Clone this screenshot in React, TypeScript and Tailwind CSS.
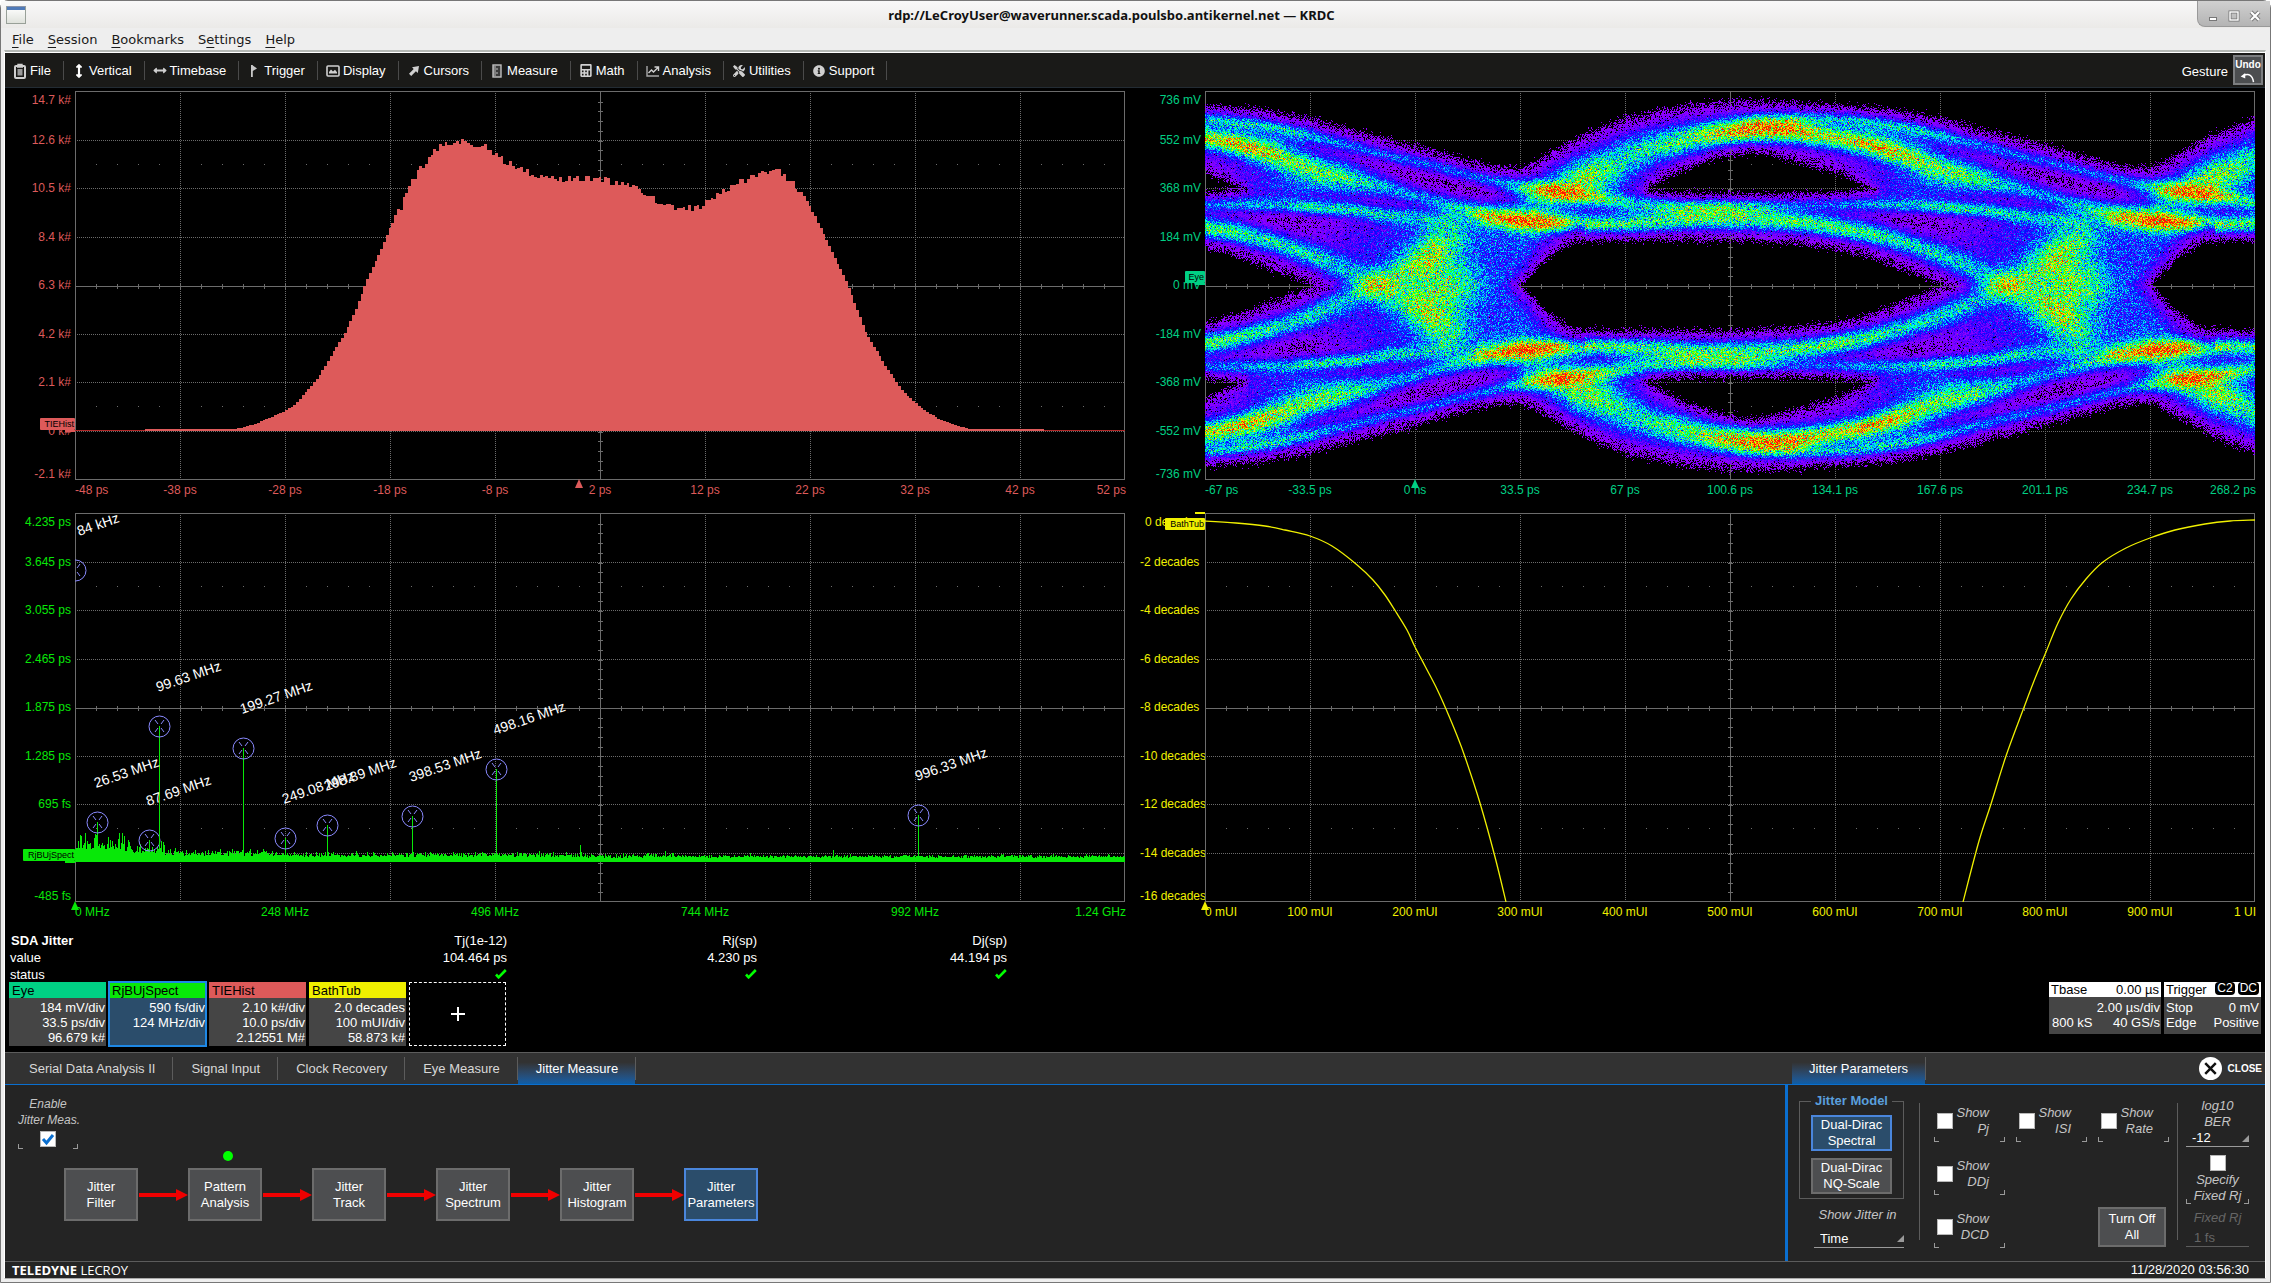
import React from "react";
import {
  FaArrowsAltH,
  FaArrowsAltV,
  FaCalculator,
  FaInfoCircle,
  FaTools,
} from "react-icons/fa";

const W = 1050;
const H = 389;
const DIV_X = 105;
const DIV_Y = 48.5;

type Pt = [number, number];
type Ridge = [number, number, number, number][];

function makeRandom(seed: number) {
  let s = seed >>> 0;
  return () => {
    s = (Math.imul(s, 1664525) + 1013904223) >>> 0;
    return s / 4294967296;
  };
}

function interp(points: Pt[], x: number) {
  if (x <= points[0][0]) return points[0][1];
  for (let i = 1; i < points.length; i++) {
    if (x <= points[i][0]) {
      const [x0, y0] = points[i - 1];
      const [x1, y1] = points[i];
      return y0 + ((y1 - y0) * (x - x0)) / (x1 - x0);
    }
  }
  return points[points.length - 1][1];
}

function smoothPath(p: Pt[]) {
  let d = `M${p[0][0]} ${p[0][1]}`;
  for (let i = 0; i < p.length - 1; i++) {
    const a = p[Math.max(i - 1, 0)];
    const b = p[i];
    const c = p[i + 1];
    const e = p[Math.min(i + 2, p.length - 1)];
    const n = [b[0] + (c[0] - a[0]) / 6, b[1] + (c[1] - a[1]) / 6, c[0] - (e[0] - b[0]) / 6, c[1] - (e[1] - b[1]) / 6];
    d += `C${n.map((v) => v.toFixed(1)).join(" ")} ${c[0]} ${c[1]}`;
  }
  return d;
}

/* ---------- Eye diagram: persistence density of the traces ---------- */

const PERIOD = 630;

/* Each ridge is unrolled in time: x, y, density, spread. */
const RIDGES: Ridge[] = [
  [
    [520, 30, 0, 7], [560, 27, 0.2, 6], [600, 25, 0.3, 6], [640, 27, 0.42, 6], [697, 35, 0.32, 5],
    [736, 44, 0.31, 5], [774, 54, 0.31, 5], [813, 64, 0.31, 5], [851, 72, 0.31, 5], [889, 82, 0.32, 5],
    [927, 91, 0.36, 6], [950, 96, 0.46, 7], [981, 101, 0.5, 7], [1019, 106, 0.46, 6], [1061, 112, 0.34, 6],
    [1110, 114, 0.3, 6], [1200, 112, 0.24, 5], [1293, 113, 0.3, 5], [1340, 114, 0.34, 5],
    [1366, 116, 0.46, 5], [1412, 119, 0.46, 5], [1443, 124, 0.38, 6], [1500, 128, 0.25, 7], [1530, 130, 0, 7],
  ],
  [
    [310, 112, 0, 10], [340, 100, 0.2, 13], [374, 84, 0.38, 17], [412, 67, 0.46, 15], [450, 55, 0.54, 13],
    [489, 46, 0.62, 11], [515, 41, 0.74, 10], [550, 38, 0.84, 9], [588, 39, 0.8, 9], [626, 46, 0.66, 8],
    [660, 52, 0.62, 8], [698, 64, 0.54, 9], [736, 76, 0.44, 10], [774, 86, 0.38, 10], [813, 97, 0.36, 7],
    [851, 107, 0.36, 6], [889, 117, 0.4, 7], [908, 124, 0.64, 8], [945, 129, 0.78, 8], [985, 132, 0.74, 7],
    [1023, 134, 0.6, 7], [1061, 133, 0.54, 8], [1120, 127, 0.55, 9], [1162, 126, 0.58, 10], [1199, 128, 0.58, 9],
    [1237, 132, 0.58, 8], [1260, 136, 0.6, 8], [1290, 141, 0.56, 8], [1328, 151, 0.49, 8],
    [1366, 164, 0.45, 9], [1393, 176, 0.38, 10], [1430, 193, 0.32, 12], [1455, 208, 0.24, 14],
    [1485, 228, 0.28, 14], [1510, 242, 0.18, 14], [1545, 256, 0, 10],
  ],
];

/* Diffuse areas: x, y, density, spread x, spread y. */
const CLOUDS: [number, number, number, number, number][] = [
  [216, 186, 0.2, 30, 20], [226, 166, 0.14, 18, 20], [255, 185, 0.18, 24, 24], [290, 160, 0.18, 36, 26],
  [330, 148, 0.14, 30, 14], [112, 92, 0.26, 40, 13], [60, 70, 0.14, 40, 18], [180, 152, 0.2, 46, 22],
  [245, 140, 0.14, 36, 14], [330, 112, 0.2, 24, 12], [385, 90, 0.3, 34, 15], [50, 105, 0.1, 40, 12],
  [60, 46, 0.14, 30, 12], [440, 118, 0.12, 60, 8], [320, 185, 0.1, 22, 24], [60, 40, 0.06, 90, 20],
];

/* Silhouette of the pattern: upper limit, lens-shaped gap and half height of the main opening. */
const OUTER: Pt[] = [
  [0, 14], [53, 17], [106, 27], [160, 41], [210, 54], [260, 68], [290, 75], [315, 77], [340, 64], [380, 42],
  [420, 26], [470, 15], [515, 10], [545, 9], [580, 10], [630, 14],
];
const LENS_TOP: Pt[] = [[0, 81], [41, 99], [80, 190], [390, 190], [443, 96], [475, 80], [513, 66], [545, 61], [565, 63], [588, 70], [630, 81]];
const LENS_BOTTOM: Pt[] = [[0, 101], [41, 97], [80, 40], [390, 40], [443, 98], [475, 102], [588, 102], [630, 101]];
const EYE_HALF: Pt[] = [
  [0, 37], [33, 29], [71, 14], [109, 0], [150, -24], [210, -70], [260, -60], [315, 0], [336, 22], [355, 36],
  [370, 44], [400, 45], [540, 45], [588, 42], [630, 37],
];

const EYE_COLORS = [
  "#9000ff", "#7a00ff", "#5a00ff", "#3800ff", "#1400ff", "#0020ff", "#0058ff", "#0098ff",
  "#00d8ff", "#00ffe0", "#00ffa0", "#00ff50", "#30ff00", "#80ff00", "#d8ff00", "#ffe000",
  "#ffa800", "#ff6000", "#ff1800",
];

function ramp(v: number) {
  const t = Math.max(0, Math.min(1, v));
  return t * t * (3 - 2 * t);
}

function buildEye(): string[] {
  const random = makeRandom(77);
  const density = new Float32Array(W * H);
  for (let x = 0; x < W; x++) {
    const local: number[][] = [];
    for (const ridge of RIDGES) {
      for (let k = -1; k < 4; k++) {
        const u = x + k * PERIOD;
        if (u < ridge[0][0] || u >= ridge[ridge.length - 1][0]) continue;
        let i = 1;
        while (ridge[i][0] <= u) i++;
        const a = ridge[i - 1];
        const b = ridge[i];
        const t = (u - a[0]) / (b[0] - a[0]);
        local.push([a[1] + (b[1] - a[1]) * t, a[2] + (b[2] - a[2]) * t, a[3] + (b[3] - a[3]) * t]);
      }
    }
    const clouds: number[][] = [];
    for (const c of CLOUDS) {
      for (let k = -1; k < 2; k++) {
        const dx = (x - c[0] - k * PERIOD) / c[3];
        if (dx * dx < 6) clouds.push([c[1], c[2], c[4], dx * dx]);
      }
    }
    const u = x % PERIOD;
    const outer = interp(OUTER, u);
    const top = interp(LENS_TOP, u);
    const bottom = interp(LENS_BOTTOM, u);
    const half = interp(EYE_HALF, u);
    for (let y = 0; y < H; y++) {
      let v = 0;
      const mirrored = H - 1 - y;
      for (const [cy, amp, s] of local) {
        const d1 = (y - cy) / s;
        const d2 = (mirrored - cy) / s;
        if (d1 * d1 < 16) v += amp * Math.exp((-d1 * d1) / 2);
        if (d2 * d2 < 16) v += amp * Math.exp((-d2 * d2) / 2);
      }
      for (const [cy, amp, s, dx2] of clouds) {
        const d1 = (y - cy) / s;
        const d2 = (mirrored - cy) / s;
        v += amp * Math.max(0, Math.exp(-(d1 * d1 + dx2) / 2) - 0.05);
        v += amp * Math.max(0, Math.exp(-(d2 * d2 + dx2) / 2) - 0.05);
      }
      const edge = Math.min(y, mirrored);
      const wobble = (random() + random() + random() - 1.5) * 5;
      const gapOuter = edge - outer + wobble;
      const gapLens = Math.max(top - edge, edge - bottom) + wobble;
      const gapEye = Math.abs(y - 194) - half + wobble;
      if (gapOuter < 0 || gapLens < 0 || gapEye < 0) v = 0;
      else {
        v = Math.max(v, 0.03 * ramp((12 - Math.min(gapOuter, gapLens, gapEye)) / 6));
        const eyeFade = u > 290 && u < 380 ? 28 : 15;
        v *= 0.12 + 0.88 * ramp(gapOuter / 16) * ramp(gapLens / 12) * ramp(gapEye / eyeFade);
        v += 0.012;
      }
      density[y * W + x] = v;
    }
  }
  const paths = EYE_COLORS.map(() => [] as string[]);
  const N = 70;
  for (let y = 0; y < H; y++) {
    let run = 0;
    let last = -1;
    for (let x = 0; x <= W; x++) {
      let level = -1;
      if (x < W) {
        const m = density[y * W + x] * N;
        const noise = random() + random() + random() + random() - 2;
        const count = m + noise * 2.7 * Math.sqrt(m);
        if (m > 0.25 && count > 0.5) {
          level = Math.min(EYE_COLORS.length - 1, Math.floor((count / N) * EYE_COLORS.length));
        }
      }
      if (level !== last) {
        if (last >= 0) paths[last].push(`M${x - run} ${y}h${run}v1h-${run}`);
        last = level;
        run = 1;
      } else run++;
    }
  }
  return paths.map((p) => p.join(""));
}

const EYE_PATHS = buildEye();

/* ---------- Jitter histogram ---------- */

const HIST: Pt[] = [
  [60, 338], [160, 338], [166, 337], [180, 333], [192, 328], [210, 320], [221, 313], [231, 301], [244, 286],
  [258, 262], [269, 244], [281, 219], [292, 189], [307, 157], [315, 137], [326, 117], [338, 89], [353, 69],
  [365, 57], [373, 54], [384, 51], [399, 55], [414, 58], [430, 71], [453, 82], [476, 89], [491, 88], [522, 88],
  [542, 92], [562, 99], [581, 111], [600, 117], [607, 119], [623, 118], [638, 107], [657, 97], [676, 86],
  [692, 81], [703, 81], [715, 91], [722, 97], [734, 117], [745, 134], [753, 152], [772, 191], [791, 241],
  [810, 274], [829, 301], [849, 319], [868, 330], [887, 336], [896, 338], [970, 338],
];

function buildHistogram() {
  const random = makeRandom(9);
  let d = "M70 340";
  for (let i = 0; 70 + i * 2.8 < 968; i++) {
    const x = 70 + i * 2.8;
    const y = interp(HIST, x + 1.4);
    const n = y < 130 ? (random() - 0.6) * 7 : 0;
    d += `L${x.toFixed(1)} ${Math.round(y + n)}H${(x + 2.8).toFixed(1)}`;
  }
  return d + "V340Z";
}

const HIST_PATH = buildHistogram();

/* ---------- Jitter spectrum ---------- */

const PEAKS: { x: number; y: number; label: string }[] = [
  { x: 0, y: 57, label: "84 kHz" },
  { x: 22, y: 309, label: "26.53 MHz" },
  { x: 74, y: 327, label: "87.69 MHz" },
  { x: 84, y: 213, label: "99.63 MHz" },
  { x: 168, y: 235, label: "199.27 MHz" },
  { x: 210, y: 325, label: "249.08 MHz" },
  { x: 252, y: 312, label: "298.89 MHz" },
  { x: 337, y: 303, label: "398.53 MHz" },
  { x: 421, y: 256, label: "498.16 MHz" },
  { x: 843, y: 302, label: "996.33 MHz" },
];

function buildSpectrum() {
  const random = makeRandom(31);
  let d = "";
  for (let x = 0; x < W; x++) {
    const base = x < 50 ? 11 : x < 90 ? 8 : x < 200 ? 5 : x < 500 ? 4 : 3;
    const spread = x < 50 ? 17 : x < 90 ? 12 : x < 200 ? 6 : x < 600 ? 4 : 2;
    const r = random();
    const h = base + r * r * spread + random() * 2;
    d += `M${x + 0.5} 349V${(348 - h).toFixed(1)}`;
  }
  return d + "M505.5 348V332M506.5 348V339M590.5 348V338M675.5 348V340M758.5 348V337M926.5 348V341";
}

const SPECTRUM_PATH = buildSpectrum();

/* ---------- Bathtub ---------- */

const BATH_LEFT = smoothPath([
  [0, 8], [31, 10], [60, 13], [80, 17], [105, 23], [127, 33], [151, 51], [168, 67], [180, 82], [191, 99],
  [202, 117], [210, 134], [220, 153], [231, 174], [241, 196], [251, 220], [260, 244], [275, 290], [290, 344],
  [301, 389],
]);
const BATH_RIGHT = smoothPath([
  [758, 389], [774, 328], [786, 291], [801, 243], [818, 197], [829, 168], [841, 139], [853, 110], [866, 86],
  [881, 66], [898, 49], [921, 35], [945, 25], [970, 17], [1000, 11], [1025, 8], [1050, 7],
]);

/* ---------- Chart frame ---------- */

function Graticule() {
  const c = "#6c6c6c";
  let ticks = "";
  let dots = "";
  for (let i = 1; i < 50; i++) {
    ticks += `M${i * 21 + 0.5} 192v5`;
    if (i % 5) dots += `M${i * 21} 73.5h1M${i * 21} 315.5h1`;
  }
  for (let i = 1; i < 40; i++) ticks += `M523 ${Math.round(i * 9.7) + 0.5}h5`;
  let dashed = "";
  for (let i = 1; i < 10; i++) if (i !== 5) dashed += `M${i * DIV_X + 0.5} 0V388`;
  for (let i = 1; i < 8; i++) if (i !== 4) dashed += `M0 ${Math.round(i * DIV_Y) + 0.5}H1050`;
  return (
    <g fill="none" stroke={c} strokeWidth="1" shapeRendering="crispEdges">
      <path d={dashed} strokeDasharray="1 1" />
      <path d="M0 195.5H1050M525.5 0V388" />
      <path d={ticks} transform="translate(0 1)" />
      <path d={dots} />
      <rect x="0.5" y="0.5" width="1049" height="388" />
    </g>
  );
}

interface ChartProps {
  name: string;
  color: string;
  yLabels: string[];
  xLabels: string[];
  xEvery?: number;
  marker: number;
  tag: { y: number; width: number; bar: number };
  startLabels?: boolean;
  children: React.ReactNode;
}

function Chart({ name, color, yLabels, xLabels, xEvery = 1, marker, tag, startLabels, children }: ChartProps) {
  const id = `clip-${name}`;
  return (
    <svg
      viewBox="0 0 1130 422"
      className="block h-auto w-full font-['Liberation_Sans',Arial,sans-serif] text-[12px]"
      role="img"
      aria-label={name}
    >
      <defs>
        <clipPath id={id}>
          <rect x="0" y="0" width={W} height={H} />
        </clipPath>
      </defs>
      <g fill={color}>
        {yLabels.map((t, i) => {
          const y = i === 0 ? 12 : i === yLabels.length - 1 ? 386 : Math.round(3 + i * DIV_Y);
          return (
            <text key={t} x={startLabels ? (i === 0 ? 10 : 5) : 66} y={y + 4} textAnchor={startLabels ? "start" : "end"}>
              {t}
            </text>
          );
        })}
        {xLabels.map((t, i) => {
          const first = i === 0;
          const last = i === xLabels.length - 1;
          return (
            <text
              key={t}
              x={first ? 70 : last ? 1121 : 70 + i * xEvery * DIV_X}
              y="406"
              textAnchor={first ? "start" : last ? "end" : "middle"}
            >
              {t}
            </text>
          );
        })}
      </g>
      <g transform="translate(70 3)">
        <rect width={W} height={H} fill="#000" />
        <Graticule />
        <g clipPath={`url(#${id})`}>{children}</g>
      </g>
      <path d={`M${70 + marker} 391l4 9h-8z`} fill={color} />
      <rect x={70 - tag.width} y={tag.y} width={tag.width} height="12" rx="1" fill={color} />
      <rect x="60" y={tag.bar} width="10" height="2" fill={color} />
      <text x="69" y={tag.y + 9} textAnchor="end" fill="#000" className="text-[9px]">
        {name}
      </text>
    </svg>
  );
}

/* ---------- Small parts ---------- */

function Brackets({ className = "" }: { className?: string }) {
  return (
    <span className={`flex h-[5px] justify-between ${className}`} aria-hidden="true">
      <span className="w-[5px] border-b border-l border-[#9a9a9a]" />
      <span className="w-[5px] border-r border-b border-[#9a9a9a]" />
    </span>
  );
}

function Box({ id, checked = false }: { id: string; checked?: boolean }) {
  return (
    <span className="grid h-4 w-4 shrink-0 place-items-center">
      <input
        id={id}
        type="checkbox"
        defaultChecked={checked}
        className="peer col-start-1 row-start-1 h-4 w-4 appearance-none border border-[#b8b8b8] bg-white"
      />
      <svg viewBox="0 0 16 16" className="pointer-events-none invisible col-start-1 row-start-1 h-4 w-4 peer-checked:visible">
        <path d="M3 8l3.5 4L13 4" fill="none" stroke="#0a6fd0" strokeWidth="3" />
      </svg>
    </span>
  );
}

function ShowOption({ name }: { name: string }) {
  const id = `show-${name}`;
  return (
    <div className="w-[71px]">
      <div className="flex items-center justify-between pr-4 pl-[3px]">
        <Box id={id} />
        <label htmlFor={id} className="text-right leading-4 text-[#c4c4c4] italic">
          Show
          <br />
          {name}
        </label>
      </div>
      <Brackets />
    </div>
  );
}

function Check() {
  return (
    <svg viewBox="0 0 12 10" className="ml-auto h-[10px] w-3" role="img" aria-label="OK">
      <path d="M1 5.5l2.6 2.8L10.8 1" fill="none" stroke="#00ff00" strokeWidth="2.6" />
    </svg>
  );
}

const toolbar: { label: string; icon: React.ReactNode }[] = [
  {
    label: "File",
    icon: (
      <svg viewBox="0 0 12 16" className="h-4 w-3">
        <rect x="1" y="3" width="10" height="12" rx="1" fill="none" stroke="#d0d0d0" strokeWidth="2" />
        <path d="M4 3V1.5h4V3M3 4h6" fill="none" stroke="#d0d0d0" strokeWidth="1.4" />
        <rect x="3.5" y="6" width="5" height="6.5" fill="#9a9a9a" />
      </svg>
    ),
  },
  { label: "Vertical", icon: <FaArrowsAltV className="h-[14px] w-[10px] text-white" /> },
  { label: "Timebase", icon: <FaArrowsAltH className="h-[13px] w-[14px] text-[#d0d0d0]" /> },
  {
    label: "Trigger",
    icon: (
      <svg viewBox="0 0 8 14" className="h-[14px] w-2">
        <path d="M1 1h1.8v12H1zM2.8 1.5L7 4.5 2.8 7z" fill="#c8c8c8" />
      </svg>
    ),
  },
  {
    label: "Display",
    icon: (
      <svg viewBox="0 0 14 12" className="h-3 w-[14px]">
        <rect x="1" y="1" width="12" height="10" rx="1" fill="none" stroke="#d0d0d0" strokeWidth="1.6" />
        <path d="M3 8.5V7l2-2.4L7 6.5 9 4.8l2 2.4v1.3z" fill="#d0d0d0" />
      </svg>
    ),
  },
  {
    label: "Cursors",
    icon: (
      <svg viewBox="0 0 12 12" className="h-3 w-3">
        <path d="M11 1L9.8 8 7.9 6.3 3.2 11 1 8.8 5.7 4.1 4 2.3z" fill="#d0d0d0" />
      </svg>
    ),
  },
  {
    label: "Measure",
    icon: (
      <svg viewBox="0 0 10 14" className="h-[14px] w-[10px]">
        <rect x="1" y="1" width="8" height="12" fill="#3a3a3a" stroke="#c0c0c0" strokeWidth="1.4" />
        <path d="M1 3h3M1 5h5M1 7h3M1 9h5M1 11h3" stroke="#c0c0c0" strokeWidth="1" />
      </svg>
    ),
  },
  { label: "Math", icon: <FaCalculator className="h-[13px] w-3 text-[#d0d0d0]" /> },
  {
    label: "Analysis",
    icon: (
      <svg viewBox="0 0 14 12" className="h-3 w-[14px]">
        <path d="M1 1v10h12" fill="none" stroke="#a8a8a8" strokeWidth="1.4" />
        <path d="M2.5 8l3-3 2 2L12 2.5M8.5 2H12.5V6" fill="none" stroke="#d0d0d0" strokeWidth="1.4" />
      </svg>
    ),
  },
  { label: "Utilities", icon: <FaTools className="h-3 w-3 text-[#d0d0d0]" /> },
  { label: "Support", icon: <FaInfoCircle className="h-3 w-3 text-[#d0d0d0]" /> },
];

const descriptors = [
  { name: "Eye", head: "bg-[#00d084]", lines: ["184 mV/div", "33.5 ps/div", "96.679 k#"] },
  { name: "RjBUjSpect", head: "bg-[#08e808]", lines: ["590 fs/div", "124 MHz/div"], active: true },
  { name: "TIEHist", head: "bg-[#dd5a5a]", lines: ["2.10 k#/div", "10.0 ps/div", "2.12551 M#"] },
  { name: "BathTub", head: "bg-[#f0f000]", lines: ["2.0 decades", "100 mUI/div", "58.873 k#"] },
];

const steps = [
  ["Jitter", "Filter"],
  ["Pattern", "Analysis"],
  ["Jitter", "Track"],
  ["Jitter", "Spectrum"],
  ["Jitter", "Histogram"],
  ["Jitter", "Parameters"],
];

const results = [
  { name: "Tj(1e-12)", value: "104.464 ps" },
  { name: "Rj(sp)", value: "4.230 ps" },
  { name: "Dj(sp)", value: "44.194 ps" },
];

const tabs = ["Serial Data Analysis II", "Signal Input", "Clock Recovery", "Eye Measure", "Jitter Measure"];

const greyButton = "border-2 border-[#6c6c6c] bg-[#4d4e50]";
const blueButton = "border-2 border-[#4a86dc] bg-[#2b4d6b]";

/* ---------- Window chrome ---------- */

function TitleBar() {
  return (
    <header className="flex h-[27px] items-start bg-gradient-to-b from-[#f8f8f8] to-[#ebeae8]">
      <span className="mt-[5px] ml-[5px] h-[18px] w-5 border border-[#98a098] border-t-[#8a94a8] bg-gradient-to-b from-white to-[#dfe2dc]">
        <span className="block h-[3px] bg-[#4f7ab8]" />
      </span>
      <h1 className="flex-1 text-center font-['Noto_Sans',sans-serif] text-[13px] leading-[28px] font-bold text-[#111]">
        rdp://LeCroyUser@waverunner.scada.poulsbo.antikernel.net — KRDC
      </h1>
      <div className="flex h-[26px] w-[73px] items-center justify-around rounded-bl-lg border-b border-l border-[#999] bg-gradient-to-b from-[#d0d0d0] to-[#b4b4b4] px-1 pt-1">
        <button aria-label="Minimize" className="flex h-4 w-4 items-center justify-center">
          <svg viewBox="0 0 12 12" className="h-3 w-3">
            <rect x="2.5" y="7.5" width="7" height="3" fill="#fff" stroke="#777" />
          </svg>
        </button>
        <button aria-label="Maximize" className="flex h-4 w-4 items-center justify-center">
          <svg viewBox="0 0 12 12" className="h-3 w-3">
            <rect x="2" y="2" width="8" height="8" fill="none" stroke="#777" strokeWidth="3" />
            <rect x="2" y="2" width="8" height="8" fill="none" stroke="#fff" strokeWidth="1.4" />
          </svg>
        </button>
        <button aria-label="Close window" className="flex h-4 w-4 items-center justify-center">
          <svg viewBox="0 0 12 12" className="h-3 w-3">
            <path d="M2 2l8 8M10 2l-8 8" stroke="#777" strokeWidth="4" />
            <path d="M2 2l8 8M10 2l-8 8" stroke="#fff" strokeWidth="2.2" />
          </svg>
        </button>
      </div>
    </header>
  );
}

function MenuBar() {
  const items = [
    ["", "F", "ile"],
    ["", "S", "ession"],
    ["", "B", "ookmarks"],
    ["S", "e", "ttings"],
    ["", "H", "elp"],
  ];
  return (
    <nav className="flex h-[22px] items-center gap-[14px] bg-[#eeeeee] pt-[2px] pl-[11px] font-['DejaVu_Sans',sans-serif] text-[13px] text-[#1a1a1a]">
      {items.map(([a, b, c]) => (
        <button key={b} className="leading-5">
          {a}
          <span className="underline underline-offset-[3px]">{b}</span>
          {c}
        </button>
      ))}
    </nav>
  );
}

function Toolbar() {
  return (
    <div className="flex h-[35px] items-stretch border-b border-[#232c34] bg-[#1a1a18] text-white">
      {toolbar.map((t) => (
        <button key={t.label} className="flex items-center pt-px pl-[5px]">
          <span className="flex w-5 justify-center">{t.icon}</span>
          <span className="pr-3">{t.label}</span>
          <span className="h-[19px] w-px bg-[#4a4a4a]" />
        </button>
      ))}
      <span className="ml-auto self-center pt-1 pr-[5px]">Gesture</span>
      <button className="mt-[2px] mr-[2px] flex h-[30px] w-[30px] flex-col items-center border-2 border-[#7c7e80] bg-[#4c4e50] text-[10px] leading-[15px] font-bold">
        Undo
        <svg viewBox="0 0 18 12" className="h-3 w-[18px]">
          <path d="M4 4c6-3 10 0 11 7" fill="none" stroke="#fff" strokeWidth="1.6" />
          <path d="M1 5l5-4v6z" fill="#fff" />
        </svg>
      </button>
    </div>
  );
}

/* ---------- Page sections ---------- */

function Charts() {
  return (
    <div className="grid grid-cols-2 bg-black">
      <Chart
        name="TIEHist"
        color="#dd5a5a"
        marker={504}
        tag={{ y: 330, width: 35, bar: 342 }}
        yLabels={["14.7 k#", "12.6 k#", "10.5 k#", "8.4 k#", "6.3 k#", "4.2 k#", "2.1 k#", "0 k#", "-2.1 k#"]}
        xLabels={["-48 ps", "-38 ps", "-28 ps", "-18 ps", "-8 ps", "2 ps", "12 ps", "22 ps", "32 ps", "42 ps", "52 ps"]}
      >
        <path d="M0 339.5H1050" stroke="#b02828" strokeWidth="1" />
        <path d={HIST_PATH} fill="#dd5a5a" shapeRendering="crispEdges" />
      </Chart>
      <Chart
        name="Eye"
        color="#00d084"
        marker={210}
        tag={{ y: 183, width: 20, bar: 195 }}
        yLabels={["736 mV", "552 mV", "368 mV", "184 mV", "0 mV", "-184 mV", "-368 mV", "-552 mV", "-736 mV"]}
        xLabels={["-67 ps", "-33.5 ps", "0 ns", "33.5 ps", "67 ps", "100.6 ps", "134.1 ps", "167.6 ps", "201.1 ps", "234.7 ps", "268.2 ps"]}
      >
        <g shapeRendering="crispEdges">
          {EYE_PATHS.map((d, i) => (
            <path key={EYE_COLORS[i]} d={d} fill={EYE_COLORS[i]} />
          ))}
        </g>
      </Chart>
      <Chart
        name="RjBUjSpect"
        color="#08e808"
        marker={0}
        tag={{ y: 339, width: 52, bar: 351 }}
        xEvery={2}
        yLabels={["4.235 ps", "3.645 ps", "3.055 ps", "2.465 ps", "1.875 ps", "1.285 ps", "695 fs", "", "-485 fs"]}
        xLabels={["0 MHz", "248 MHz", "496 MHz", "744 MHz", "992 MHz", "1.24 GHz"]}
      >
        <path d={SPECTRUM_PATH} stroke="#08e808" strokeWidth="1" shapeRendering="crispEdges" />
        {PEAKS.map((p) => (
          <g key={p.label}>
            {p.x > 0 && <path d={`M${p.x + 0.5} 348V${p.y}`} stroke="#08e808" shapeRendering="crispEdges" />}
            <circle cx={p.x + 0.5} cy={p.y + 0.5} r="10.5" fill="none" stroke="#8a8aff" />
            <path
              d={`M${p.x - 4} ${p.y - 6}l3 4M${p.x + 5} ${p.y - 6}l-3 4M${p.x - 4} ${p.y + 6}l3 -4M${p.x + 5} ${p.y + 6}l-3 -4`}
              stroke="#8a8aff"
              fill="none"
            />
          </g>
        ))}
        {PEAKS.map((p) => (
          <text
            key={p.label}
            transform={`translate(${Math.max(p.x - 1, 4)} ${p.y - 34}) rotate(-19)`}
            fill="#fff"
            className="text-[14px]"
          >
            {p.label}
          </text>
        ))}
      </Chart>
      <Chart
        name="BathTub"
        color="#f0f000"
        marker={0}
        startLabels
        tag={{ y: 8, width: 40, bar: 2 }}
        yLabels={["0 decades", "-2 decades", "-4 decades", "-6 decades", "-8 decades", "-10 decades", "-12 decades", "-14 decades", "-16 decades"]}
        xLabels={["0 mUI", "100 mUI", "200 mUI", "300 mUI", "400 mUI", "500 mUI", "600 mUI", "700 mUI", "800 mUI", "900 mUI", "1 UI"]}
      >
        <path d={BATH_LEFT} fill="none" stroke="#f0f000" strokeWidth="1.3" />
        <path d={BATH_RIGHT} fill="none" stroke="#f0f000" strokeWidth="1.3" />
      </Chart>
    </div>
  );
}

function Results() {
  return (
    <table className="w-[1002px] table-fixed leading-none text-white">
      <thead>
        <tr className="h-[17px]">
          <th className="w-[252px] pl-[6px] text-left font-bold">SDA Jitter</th>
          {results.map((r) => (
            <th key={r.name} className="text-right font-normal">
              {r.name}
            </th>
          ))}
        </tr>
      </thead>
      <tbody>
        <tr className="h-[17px]">
          <th className="pl-[5px] text-left font-normal">value</th>
          {results.map((r) => (
            <td key={r.name} className="text-right">
              {r.value}
            </td>
          ))}
        </tr>
        <tr className="h-4">
          <th className="pl-[5px] text-left font-normal">status</th>
          {results.map((r) => (
            <td key={r.name}>
              <Check />
            </td>
          ))}
        </tr>
      </tbody>
    </table>
  );
}

function Descriptors() {
  return (
    <div className="flex items-start pr-[4px] pb-[6px] pl-1 leading-[15px] text-white">
      <div className="flex gap-[3px]">
        {descriptors.map((d) => (
          <button
            key={d.name}
            className={`flex h-16 w-[97px] flex-col ${d.active ? "bg-[#2b4d6b] outline-2 -outline-offset-1 outline-[#1e88e5]" : "bg-[#454545]"}`}
          >
            <span className={`h-4 w-full pl-[3px] text-left leading-[17px] text-black ${d.head}`}>{d.name}</span>
            <span className="w-full pt-[2px] pr-px text-right">
              {d.lines.map((l) => (
                <span key={l} className="block">
                  {l}
                </span>
              ))}
            </span>
          </button>
        ))}
        <button aria-label="Add trace" className="flex h-16 w-[97px] items-center justify-center border border-dashed border-white">
          <svg viewBox="0 0 14 14" className="h-[14px] w-[14px]">
            <path d="M7 0v14M0 7h14" stroke="#fff" strokeWidth="2" />
          </svg>
        </button>
      </div>
      <div className="ml-auto flex gap-[3px]">
        <div className="w-28 bg-[#454545] pb-1">
          <div className="flex h-[15px] justify-between bg-white px-[2px] leading-4 text-black">
            <span>Tbase</span>
            <span>0.00 µs</span>
          </div>
          <div className="pt-[3px] pr-px text-right">2.00 µs/div</div>
          <div className="flex justify-between pr-px pl-[3px]">
            <span>800 kS</span>
            <span>40 GS/s</span>
          </div>
        </div>
        <div className="w-[97px] bg-[#454545] pb-1">
          <div className="flex h-[15px] justify-between bg-white px-[2px] leading-4 text-black">
            <span>Trigger</span>
            <span className="flex gap-[3px] text-[12px] leading-3 text-white">
              <span className="h-[13px] rounded-sm bg-black px-[2px]">C2</span>
              <span className="h-[13px] rounded-sm bg-black px-[2px]">DC</span>
            </span>
          </div>
          <div className="flex justify-between px-[2px] pt-[3px]">
            <span>Stop</span>
            <span>0 mV</span>
          </div>
          <div className="flex justify-between px-[2px]">
            <span>Edge</span>
            <span>Positive</span>
          </div>
        </div>
      </div>
    </div>
  );
}

const activeTab = "bg-gradient-to-b from-[#323232] from-30% to-[#0b5ea8] text-white";

function TabBar() {
  return (
    <div className="flex h-[33px] items-center border-t border-b border-t-[#5c5c5c] border-b-[#0a6fd0] bg-[#323232] text-[#d8d8d8]">
      <div className="flex h-full flex-1 items-center pl-[6px]">
        {tabs.map((t, i) => (
          <div key={t} className="flex h-full items-center">
            <button className={`h-full pr-[17px] pl-[18px] ${i === 4 ? activeTab : ""}`}>{t}</button>
            <span className="h-[23px] w-px bg-[#5c5c5c]" />
          </div>
        ))}
      </div>
      <div className="flex h-full w-[473px] items-center">
        <button className={`h-full px-[17px] ${activeTab}`}>Jitter Parameters</button>
        <span className="h-[23px] w-px bg-[#5c5c5c]" />
        <button className="mr-[3px] ml-auto flex items-center gap-[6px] text-[10px] font-bold text-white">
          <svg viewBox="0 0 24 24" className="h-[23px] w-[23px]">
            <circle cx="12" cy="12" r="12" fill="#fff" />
            <path d="M6.5 6.5l11 11M17.5 6.5l-11 11" stroke="#111" strokeWidth="2.6" />
          </svg>
          CLOSE
        </button>
      </div>
    </div>
  );
}

function JitterMeasure() {
  return (
    <div className="flex-1 pt-[11px]">
      <div className="ml-[13px] flex w-[60px] flex-col items-stretch text-[12px]">
        <label htmlFor="enable" className="text-center leading-4 whitespace-nowrap text-[#c4c4c4] italic">
          Enable
          <br />
          Jitter Meas.
        </label>
        <span className="flex justify-center pt-[3px]">
          <Box id="enable" checked />
        </span>
        <Brackets className="-mt-[3px]" />
      </div>
      <div className="mt-[19px] ml-[59px] flex items-center">
        {steps.map(([a, b], i) => (
          <React.Fragment key={b}>
            {i > 0 && (
              <svg viewBox="0 0 50 12" className="h-3 w-[50px] shrink-0">
                <path d="M1 4h37V0l12 6-12 6V8H1z" fill="#f00000" />
              </svg>
            )}
            <div className="relative">
              {i === 1 && <span className="absolute -top-[17px] left-[35px] h-[10px] w-[10px] rounded-full bg-[#00ff00]" />}
              <button className={`h-[53px] w-[74px] leading-4 whitespace-nowrap text-white ${i === 5 ? blueButton : greyButton}`}>
                {a}
                <br />
                {b}
              </button>
            </div>
          </React.Fragment>
        ))}
      </div>
    </div>
  );
}

function Corner() {
  return (
    <svg viewBox="0 0 8 8" className="pointer-events-none col-start-1 row-start-1 h-[7px] w-[7px] self-center justify-self-end">
      <path d="M8 0v8H0z" fill="#9a9a9a" />
    </svg>
  );
}

function JitterParameters() {
  return (
    <div className="flex w-[480px] border-l-[3px] border-[#0a6fd0] pt-2 pl-[11px]">
      <div className="w-[105px]">
        <fieldset className="border border-[#5c5c5c] px-[11px] pt-[6px] pb-[4px]">
          <legend className="mx-auto px-1 leading-4 font-bold text-[#5a9fdc]">Jitter Model</legend>
          <div className="flex flex-col gap-[7px] text-white">
            <button className={`h-9 leading-4 ${blueButton}`}>
              Dual-Dirac
              <br />
              Spectral
            </button>
            <button className={`h-9 leading-4 ${greyButton}`}>
              Dual-Dirac
              <br />
              NQ-Scale
            </button>
          </div>
        </fieldset>
        <label htmlFor="show-in" className="mt-2 block pl-3 text-center leading-4 whitespace-nowrap text-[#c4c4c4] italic">
          Show Jitter in
        </label>
        <div className="mt-[6px] ml-[15px] grid border-b border-[#9a9a9a]">
          <select id="show-in" className="col-start-1 row-start-1 h-[18px] appearance-none bg-transparent pl-[6px] text-white">
            <option>Time</option>
          </select>
          <Corner />
        </div>
      </div>
      <div className="mt-[10px] ml-[15px] h-[137px] w-px bg-[#5c5c5c]" />
      <div className="mt-3 ml-[14px] grid grid-cols-[71px_71px_71px] gap-x-[11px] gap-y-4 self-start">
        <ShowOption name="Pj" />
        <ShowOption name="ISI" />
        <ShowOption name="Rate" />
        <ShowOption name="DDj" />
        <span className="col-span-2" />
        <ShowOption name="DCD" />
        <button className={`col-start-3 h-10 w-[68px] -translate-y-1 leading-4 text-white ${greyButton}`}>
          Turn Off
          <br />
          All
        </button>
      </div>
      <div className="mt-[10px] ml-2 h-[137px] w-px bg-[#5c5c5c]" />
      <div className="mt-[5px] ml-2 w-[63px] text-center leading-4 text-[#c4c4c4] italic">
        <label htmlFor="ber" className="block">
          log10
          <br />
          BER
        </label>
        <div className="grid border-b border-[#9a9a9a] not-italic">
          <select id="ber" className="col-start-1 row-start-1 h-4 appearance-none bg-transparent pl-[6px] text-white">
            <option>-12</option>
          </select>
          <Corner />
        </div>
        <span className="flex justify-center pt-2">
          <Box id="fixed" />
        </span>
        <label htmlFor="fixed" className="mt-px block whitespace-nowrap">
          Specify
          <br />
          Fixed Rj
        </label>
        <Brackets className="-mt-[5px]" />
        <label htmlFor="rj" className="mt-[6px] block text-[#666]">
          Fixed Rj
        </label>
        <input
          id="rj"
          disabled
          defaultValue="1 fs"
          className="mt-[2px] h-[19px] w-full border-b border-[#5c5c5c] bg-transparent pl-2 text-[#666] not-italic"
        />
      </div>
    </div>
  );
}

export default function App() {
  return (
    <div className="flex min-h-screen flex-col rounded-t-lg border border-[#777] bg-[#eeeeee] font-['Liberation_Sans',Arial,sans-serif] text-[13px]">
      <TitleBar />
      <MenuBar />
      <main className="mr-1 mb-[3px] ml-[3px] flex flex-1 flex-col border-x border-t-2 border-b border-x-white border-t-[#b4b8b4] border-b-[#aaa] bg-black">
        <div className="h-px bg-white" />
        <Toolbar />
        <Charts />
        <Results />
        <Descriptors />
        <TabBar />
        <div className="flex flex-1 bg-[#242424]">
          <JitterMeasure />
          <JitterParameters />
        </div>
        <footer className="flex h-[17px] items-center justify-between border-t border-[#5c5c5c] bg-[#242424] pr-4 pl-[7px] leading-4 text-white">
          <span className="font-['Open_Sans',sans-serif] text-[13px]">
            <b>TELEDYNE</b> LECROY
          </span>
          <time>11/28/2020 03:56:30</time>
        </footer>
      </main>
    </div>
  );
}
